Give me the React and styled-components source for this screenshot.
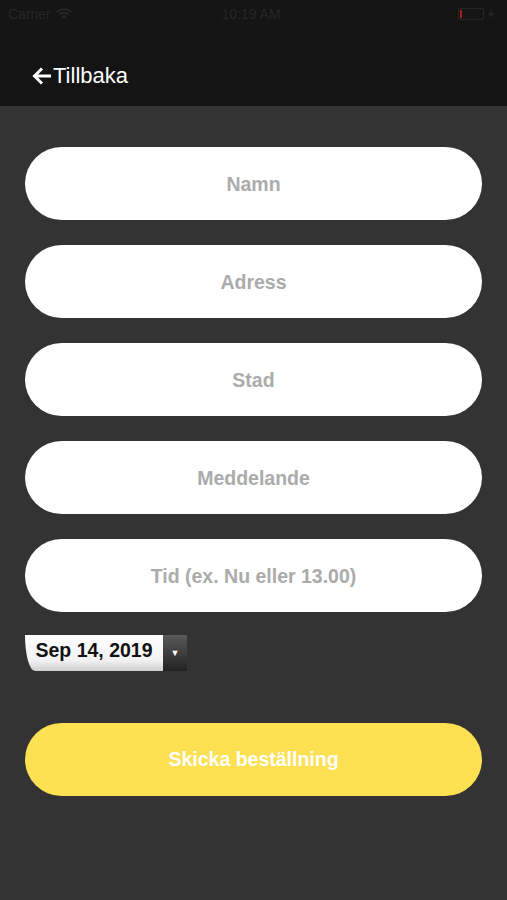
import React from 'react'
import styled, { createGlobalStyle } from 'styled-components'

const GlobalStyle = createGlobalStyle`
  html, body {
    margin: 0;
    padding: 0;
    background: #333333;
    font-family: "Liberation Sans", Arial, sans-serif;
  }
`

const fields = ['Namn', 'Adress', 'Stad', 'Meddelande', 'Tid (ex. Nu eller 13.00)']

const App = () => {
  return (
    <>
      <GlobalStyle />
      <Page>
        <Header>
          <StatusBar>
            <StatusLeft>
              Carrier
              <svg width="16" height="12" viewBox="0 0 16 12">
                <path d="M1 4 A10 10 0 0 1 15 4" stroke="#262626" strokeWidth="2" fill="none" />
                <path d="M3.5 6.5 A6.5 6.5 0 0 1 12.5 6.5" stroke="#262626" strokeWidth="2" fill="none" />
                <path d="M8 11 L5.5 8.6 A3.5 3.5 0 0 1 10.5 8.6 Z" fill="#262626" />
              </svg>
            </StatusLeft>
            <StatusTime>10:19 AM</StatusTime>
            <Battery>
              <BatteryBody><BatteryLevel /></BatteryBody>
              <svg width="6" height="10" viewBox="0 0 6 10">
                <path d="M4 0 L0 6 H3 L2 10 L6 4 H3 Z" fill="#262626" />
              </svg>
            </Battery>
          </StatusBar>
          <BackButton>
            <svg width="20" height="18" viewBox="0 0 20 18">
              <path d="M19 9 H3 M10 1.5 L2.5 9 L10 16.5" stroke="#ffffff" strokeWidth="3" fill="none" />
            </svg>
            Tillbaka
          </BackButton>
        </Header>
        <Form>
          {fields.map((f) => (
            <Field key={f} placeholder={f} />
          ))}
          <DatePicker>
            <DateValue>Sep 14, 2019</DateValue>
            <DateArrow>▼</DateArrow>
          </DatePicker>
          <SubmitButton>Skicka beställning</SubmitButton>
        </Form>
      </Page>
    </>
  )
}

export default App

const Page = styled.div`
  width: 507px;
  min-height: 900px;
  background: #333333;
`

const Header = styled.div`
  background: #141414;
  height: 106px;
  display: flex;
  flex-direction: column;
`

const StatusBar = styled.div`
  height: 28px;
  display: flex;
  align-items: center;
  justify-content: space-between;
  padding: 0 8px;
  color: #262626;
  font-size: 14px;
`

const StatusLeft = styled.div`
  display: flex;
  align-items: center;
  gap: 5px;
  width: 120px;
`

const StatusTime = styled.div`
  font-size: 14px;
`

const Battery = styled.div`
  width: 120px;
  display: flex;
  justify-content: flex-end;
  align-items: center;
  gap: 4px;
  padding-right: 5px;
`

const BatteryBody = styled.div`
  width: 22px;
  height: 8px;
  border: 1px solid #262626;
  border-radius: 2px;
  display: flex;
  padding: 1px;
`

const BatteryLevel = styled.div`
  width: 2px;
  background: #b01c24;
`

const BackButton = styled.div`
  display: flex;
  align-items: center;
  gap: 1px;
  margin: 35px 0 0 32px;
  color: #ffffff;
  font-size: 22px;
`

const Form = styled.div`
  display: flex;
  flex-direction: column;
  padding: 41px 25px 0;
`

const Field = styled.input`
  box-sizing: border-box;
  height: 73px;
  width: 457px;
  border: none;
  border-radius: 37px;
  background: #ffffff;
  margin-bottom: 25px;
  padding-top: 3px;
  text-align: center;
  font-family: "Liberation Sans", Arial, sans-serif;
  font-weight: bold;
  font-size: 19.5px;
  outline: none;

  &::placeholder {
    color: #ababab;
  }
`

const DatePicker = styled.div`
  display: flex;
  width: 162px;
  height: 36px;
  margin-top: -2px;
`

const DateValue = styled.div`
  flex: 1;
  display: flex;
  align-items: center;
  justify-content: center;
  padding-bottom: 5px;
  background: linear-gradient(#ffffff, #f2f2f2 70%, #cfcfcf);
  border-bottom-left-radius: 10px 36px;
  color: #111;
  font-weight: bold;
  font-size: 19.5px;
`

const DateArrow = styled.div`
  width: 24px;
  display: flex;
  align-items: center;
  justify-content: center;
  background: linear-gradient(#5a5a5a, #222);
  color: #fff;
  font-size: 9px;
`

const SubmitButton = styled.div`
  margin-top: 52px;
  height: 73px;
  border-radius: 37px;
  background: #fde152;
  color: #ffffff;
  font-weight: bold;
  font-size: 19.5px;
  display: flex;
  align-items: center;
  justify-content: center;
`
